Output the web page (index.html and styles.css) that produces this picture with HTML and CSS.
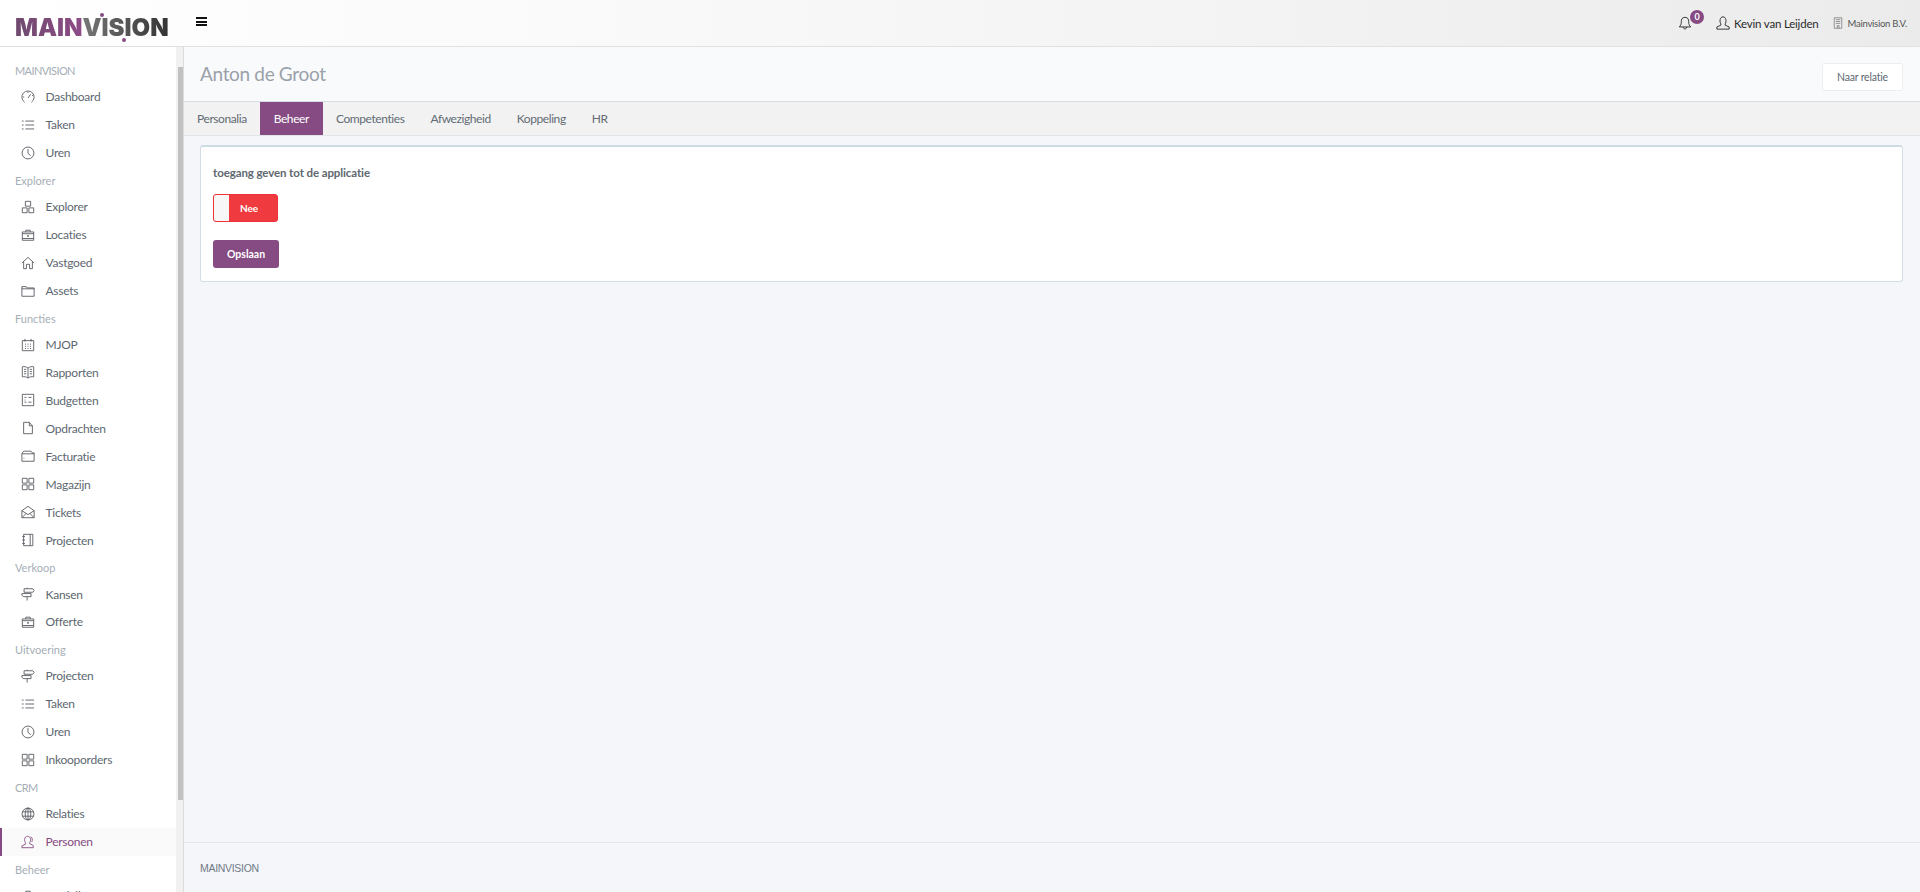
FILE: index.html
```html
<!DOCTYPE html>
<html lang="nl">
<head>
<meta charset="utf-8">
<title>Mainvision</title>
<link rel="stylesheet" href="styles.css">
</head>
<body>
<svg class="sprite" aria-hidden="true">
  <symbol id="i-gauge" viewBox="0 0 16 16"><path d="M4.2 14A7 7 0 1 1 11.8 14M8 9.2 11 4.8M3.6 8H2M8 3.4V2M12.6 6.4 14 6"/></symbol>
  <symbol id="i-list" viewBox="0 0 16 16"><path d="M5 3.5h10M5 8h10M5 12.5h10M1 3.5h2M1 8h2M1 12.5h2"/></symbol>
  <symbol id="i-clock" viewBox="0 0 16 16"><circle cx="8" cy="8" r="6.8"/><path d="M8 3.5V8.5L11 11"/></symbol>
  <symbol id="i-blocks" viewBox="0 0 16 16"><path d="M5 1.5h6v5.5H5zM1.500 9h5.500v5.500H1.500zM9 9h5.500v5.500H9z"/></symbol>
  <symbol id="i-case" viewBox="0 0 16 16"><path d="M1.500 4.500h13v9.500h-13zM5.500 4.500V2.500h5v2M1.500 6.500h13M1.500 12h13"/><path d="M7 9h2M8 8v2"/></symbol>
  <symbol id="i-home" viewBox="0 0 16 16"><path d="M1 8 8 1.500 15 8M3 6.500V14.500H6.200V9.500H9.800V14.500H13V6.500"/></symbol>
  <symbol id="i-folder" viewBox="0 0 16 16"><path d="M1 3h5l1 1.500h8V14H1zM1 5.500h14"/></symbol>
  <symbol id="i-cal" viewBox="0 0 16 16"><path d="M1.500 3h13v11.500h-13zM4.500 1v3M11.500 1v3M4.500 7h1.200M7.400 7h1.200M10.300 7h1.200M4.500 9.500h1.200M7.400 9.500h1.200M10.300 9.500h1.200M4.500 12h1.200M7.400 12h1.200M10.300 12h1.200"/></symbol>
  <symbol id="i-book" viewBox="0 0 16 16"><path d="M8 3.500C6.500 2 3.500 1.500 1.500 2V13.500C3.500 13 6.500 13.500 8 15 9.500 13.500 12.500 13 14.500 13.500V2C12.500 1.500 9.500 2 8 3.500ZM8 3.500V15M3.500 5h2.500M3.500 7.500h2.500M3.500 10h2.500M10 5h2.500M10 7.500h2.500M10 10h2.500"/></symbol>
  <symbol id="i-budget" viewBox="0 0 16 16"><path d="M1.500 1.500h13v13h-13zM4 5h2.200M8.500 5h3.500M4 10.500h2.200M8.500 10.500h3.500M4 8h1"/></symbol>
  <symbol id="i-doc" viewBox="0 0 16 16"><path d="M3 1.500h6.500L13 5.500V14.500H3zM9.500 1.500V5.500H13"/></symbol>
  <symbol id="i-folder2" viewBox="0 0 16 16"><path d="M1 5.500 3 2.500h8.500L13 4.500h2V14H1zM1 5.500h14M3 10.500h.8"/></symbol>
  <symbol id="i-grid" viewBox="0 0 16 16"><path d="M1.500 1.500h5.500v5.500H1.500zM9 1.500h5.500v5.500H9zM1.500 9h5.500v5.500H1.500zM9 9h5.500v5.500H9z"/></symbol>
  <symbol id="i-mail" viewBox="0 0 16 16"><path d="M1 6.500 8 1.500 15 6.500V14.500H1zM1 6.500 8 11 15 6.500M1 14.500 6 9.500M15 14.500 10 9.500"/></symbol>
  <symbol id="i-note" viewBox="0 0 16 16"><path d="M3 1.500h10.500v13H3zM10.500 1.500v13M1.500 4h3M1.500 8h3M1.500 12h3"/></symbol>
  <symbol id="i-sign" viewBox="0 0 16 16"><path d="M3.500 2h10l1.500 2-1.500 2h-10zM1 7.500h10.500v3.500H2.500L1 9.200zM7 2V.8M7 11v4.500"/></symbol>
  <symbol id="i-globe" viewBox="0 0 16 16"><circle cx="8" cy="8" r="6.800"/><ellipse cx="8" cy="8" rx="3.200" ry="6.800"/><path d="M8 1.200V14.800M1.500 5.500h13M1.500 10.500h13"/></symbol>
  <symbol id="i-person" viewBox="0 0 16 16"><path d="M5 8.500C3.500 6.500 3.500 1.500 7.500 1.500S11.500 6.500 10 8.500L10 10 14 12V14.500H1V12.500L5 10.500ZM11 2.200C13 2.500 13.500 6 12.300 8"/></symbol>
  <symbol id="i-user" viewBox="0 0 16 16"><path d="M5.500 9C4 7 4 1 8 1S12 7 10.500 9V10.500L15 12.500V15H1V12.500L5.500 10.500Z"/></symbol>
  <symbol id="i-bell" viewBox="0 0 16 16"><path d="M8 1.500C4.500 1.500 3.800 4 3.800 6.500 3.800 9.500 3 11 1.500 12.500H14.500C13 11 12.200 9.500 12.200 6.500 12.200 4 11.500 1.500 8 1.500ZM6 12.500C6 15.500 10 15.500 10 12.500"/></symbol>
  <symbol id="i-build" viewBox="0 0 16 16"><path d="M3 1h10v14H3zM5 3.500h6M5 6h6M5 8.500h6M7 15v-3.500h2.500V15"/></symbol>
</svg>

<header class="topbar">
  <a class="logo"><span class="logo-main">MAIN</span><span class="logo-vision">VISION</span><i class="logo-dot logo-dot-top"></i><i class="logo-dot logo-dot-bottom"></i></a>
  <button class="burger" aria-label="Menu"><span></span><span></span><span></span></button>
  <div class="top-right">
    <span class="bell"><svg class="ico ico-dark"><use href="#i-bell"/></svg><b class="badge">0</b></span>
    <span class="who"><svg class="ico ico-dark"><use href="#i-user"/></svg>Kevin van Leijden</span>
    <span class="org"><svg class="ico ico-org"><use href="#i-build"/></svg>Mainvision B.V.</span>
  </div>
</header>

<div class="shell">
  <aside class="side">
    <nav class="nav">
      <div class="nav-label nav-label-caps">MAINVISION</div>
      <a class="nav-item"><svg class="ico"><use href="#i-gauge"/></svg>Dashboard</a>
      <a class="nav-item"><svg class="ico"><use href="#i-list"/></svg>Taken</a>
      <a class="nav-item"><svg class="ico"><use href="#i-clock"/></svg>Uren</a>
      <div class="nav-label">Explorer</div>
      <a class="nav-item"><svg class="ico"><use href="#i-blocks"/></svg>Explorer</a>
      <a class="nav-item"><svg class="ico"><use href="#i-case"/></svg>Locaties</a>
      <a class="nav-item"><svg class="ico"><use href="#i-home"/></svg>Vastgoed</a>
      <a class="nav-item"><svg class="ico"><use href="#i-folder"/></svg>Assets</a>
      <div class="nav-label">Functies</div>
      <a class="nav-item"><svg class="ico"><use href="#i-cal"/></svg>MJOP</a>
      <a class="nav-item"><svg class="ico"><use href="#i-book"/></svg>Rapporten</a>
      <a class="nav-item"><svg class="ico"><use href="#i-budget"/></svg>Budgetten</a>
      <a class="nav-item"><svg class="ico"><use href="#i-doc"/></svg>Opdrachten</a>
      <a class="nav-item"><svg class="ico"><use href="#i-folder2"/></svg>Facturatie</a>
      <a class="nav-item"><svg class="ico"><use href="#i-grid"/></svg>Magazijn</a>
      <a class="nav-item"><svg class="ico"><use href="#i-mail"/></svg>Tickets</a>
      <a class="nav-item"><svg class="ico"><use href="#i-note"/></svg>Projecten</a>
      <div class="nav-label">Verkoop</div>
      <a class="nav-item"><svg class="ico"><use href="#i-sign"/></svg>Kansen</a>
      <a class="nav-item"><svg class="ico"><use href="#i-case"/></svg>Offerte</a>
      <div class="nav-label">Uitvoering</div>
      <a class="nav-item"><svg class="ico"><use href="#i-sign"/></svg>Projecten</a>
      <a class="nav-item"><svg class="ico"><use href="#i-list"/></svg>Taken</a>
      <a class="nav-item"><svg class="ico"><use href="#i-clock"/></svg>Uren</a>
      <a class="nav-item"><svg class="ico"><use href="#i-grid"/></svg>Inkooporders</a>
      <div class="nav-label nav-label-caps">CRM</div>
      <a class="nav-item"><svg class="ico"><use href="#i-globe"/></svg>Relaties</a>
      <a class="nav-item is-active"><svg class="ico"><use href="#i-person"/></svg>Personen</a>
      <div class="nav-label">Beheer</div>
      <a class="nav-item"><svg class="ico"><use href="#i-case"/></svg>Modellen</a>
    </nav>
    <div class="scroll"><div class="scroll-thumb"></div></div>
  </aside>

  <main class="content">
    <section class="page-head">
      <h1 class="page-title">Anton de Groot</h1>
      <a class="btn-light">Naar relatie</a>
    </section>
    <ul class="tabs">
      <li class="tab">Personalia</li>
      <li class="tab is-active">Beheer</li>
      <li class="tab">Competenties</li>
      <li class="tab">Afwezigheid</li>
      <li class="tab">Koppeling</li>
      <li class="tab">HR</li>
    </ul>
    <div class="body">
      <form class="card">
        <label class="field-label">toegang geven tot de applicatie</label>
        <div class="toggle"><span class="toggle-handle"></span><span class="toggle-text">Nee</span></div>
        <button class="btn-primary" type="button">Opslaan</button>
      </form>
    </div>
    <footer class="foot">MAINVISION</footer>
  </main>
</div>
</body>
</html>
```
FILE: styles.css
```css
* { box-sizing: border-box; }
html, body { margin: 0; height: 892px; overflow: hidden; }
body {
  display: flex;
  flex-direction: column;
  font-family: "Lato", "Noto Sans", sans-serif;
  font-size: 12px;
  letter-spacing: -0.25px;
  color: #5d6770;
  background: #f4f6fa;
}
.sprite { display: none; }
.ico {
  width: 14px;
  height: 14px;
  flex: none;
  fill: none;
  stroke: #55575e;
  stroke-width: 1;
}

/* top bar */
.topbar {
  height: 47px;
  flex: none;
  display: flex;
  align-items: center;
  background: linear-gradient(90deg, #ffffff 0%, #f6f6f6 50%, #ebebeb 100%);
  border-bottom: 1px solid #dfe1e3;
}
.logo {
  position: relative;
  width: 196px;
  margin-top: 10px;
  padding-left: 15px;
  font-family: "Inter", sans-serif;
  font-weight: 900;
  font-size: 24px;
  line-height: 30px;
  letter-spacing: 0;
  white-space: nowrap;
}
.logo-main {
  background: linear-gradient(90deg, #6f4a6e, #8d4b87);
  -webkit-background-clip: text;
  background-clip: text;
  color: transparent;
}
.logo-vision {
  background: linear-gradient(90deg, #777, #333);
  -webkit-background-clip: text;
  background-clip: text;
  color: transparent;
}
.logo-dot {
  position: absolute;
  width: 4px;
  height: 4px;
  border-radius: 50%;
  background: #854b82;
}
.logo-dot-top { left: 100px; top: 0; }
.logo-dot-bottom { left: 122px; top: 25px; }
.burger {
  width: 11px;
  padding: 0;
  margin: -3px 0 0;
  border: 0;
  background: none;
  display: flex;
  flex-direction: column;
  gap: 1.5px;
}
.burger span { height: 2px; background: #111; }
.top-right {
  margin-left: auto;
  display: flex;
  align-items: center;
  padding-right: 13px;
}
.bell { position: relative; display: flex; margin-right: 24px; }
.ico-dark { stroke: #222; }
.badge {
  position: absolute;
  left: 12px;
  top: -6px;
  width: 14px;
  height: 14px;
  border-radius: 50%;
  background: #854b82;
  color: #fff;
  font-size: 9px;
  line-height: 14px;
  text-align: center;
}
.who {
  display: flex;
  align-items: center;
  gap: 4px;
  color: #2a2a2a;
  font-size: 11.5px;
  letter-spacing: -0.2px;
  margin-right: 13px;
}
.org {
  display: flex;
  align-items: center;
  gap: 4px;
  color: #555;
  font-size: 9.5px;
}
.ico-org { stroke: #777; width: 12px; height: 12px; }

/* shell */
.shell { flex: 1; min-height: 0; display: flex; }
.side {
  width: 184px;
  flex: none;
  display: flex;
  background: #fff;
  overflow: hidden;
}
.nav { width: 176px; flex: none; padding-top: 10px; }
.nav-label {
  height: 26px;
  padding: 1px 0 0 15px;
  line-height: 26px;
  font-size: 11px;
  letter-spacing: 0;
  color: #a6aeb6;
}
.nav-label-caps { letter-spacing: -0.6px; }
.nav-item {
  height: 27.95px;
  display: flex;
  align-items: center;
  gap: 10.5px;
  padding-left: 21px;
  white-space: nowrap;
}
.nav-item.is-active {
  background: #fafafa;
  border-left: 2px solid #854b82;
  padding-left: 19px;
  color: #854b82;
}
.nav-item.is-active .ico { stroke: #854b82; }
.scroll {
  flex: 1;
  background: #f1f1f1;
  border-right: 1px solid #dcdcdc;
  padding: 20px 0 0 2px;
}
.scroll-thumb { height: 733px; background: #c1c1c1; }

/* content */
.content { flex: 1; min-width: 0; display: flex; flex-direction: column; }
.page-head {
  height: 55px;
  flex: none;
  display: flex;
  align-items: center;
  justify-content: space-between;
  padding: 0 17px 0 16px;
  background: #f9fafc;
  border-bottom: 1px solid #d5dee6;
}
.page-title {
  margin: -2px 0 0;
  font-size: 19px;
  font-weight: 400;
  letter-spacing: -0.33px;
  color: #99a1a9;
}
.btn-light {
  width: 81px;
  height: 28px;
  margin-top: 6px;
  display: flex;
  align-items: center;
  justify-content: center;
  background: #fff;
  border: 1px solid #eceef0;
  border-radius: 2px;
  font-size: 10.5px;
  letter-spacing: -0.2px;
  color: #5d6770;
}
.tabs {
  height: 34px;
  flex: none;
  margin: 0;
  padding: 0;
  display: flex;
  list-style: none;
  background: #f2f2f2;
  border-bottom: 1px solid #dfe5e9;
}
.tab {
  height: 33px;
  padding: 0 13px;
  line-height: 33px;
  letter-spacing: -0.42px;
  color: #636c74;
}
.tab.is-active { background: #854b82; color: #fff; padding: 0 14px; }
.body { flex: 1; padding: 9px 17px 0 16px; }
.card {
  height: 137px;
  padding: 16px 12px 0;
  background: #fff;
  border: 1px solid #d3dee6;
  border-top: 2px solid #cddbe4;
  border-radius: 3px;
}
.field-label {
  display: block;
  height: 20px;
  line-height: 20px;
  font-weight: 700;
  font-size: 11.5px;
  letter-spacing: -0.1px;
  color: #60686f;
}
.toggle {
  width: 65px;
  height: 28px;
  margin-top: 11px;
  display: flex;
  background: #ef3b3f;
  border: 1px solid #ee3338;
  border-radius: 3px;
}
.toggle-handle {
  width: 15px;
  background: #f7f7f8;
  border-radius: 2px 0 0 2px;
}
.toggle-text {
  flex: 1;
  padding-right: 8px;
  text-align: center;
  line-height: 26px;
  color: #fff;
  font-size: 10px;
  letter-spacing: 0;
  font-weight: 700;
}
.btn-primary {
  display: block;
  width: 66px;
  height: 28px;
  margin-top: 18px;
  padding: 0;
  border: 0;
  border-radius: 3px;
  background: #854b82;
  color: #fff;
  font-family: inherit;
  font-size: 10.5px;
  letter-spacing: 0;
  font-weight: 700;
}
.foot {
  height: 50px;
  flex: none;
  padding-left: 16px;
  line-height: 50px;
  border-top: 1px solid #e3e6ea;
  font-family: "Liberation Sans", sans-serif;
  font-size: 10.5px;
  letter-spacing: -0.3px;
  color: #707b86;
}
```
